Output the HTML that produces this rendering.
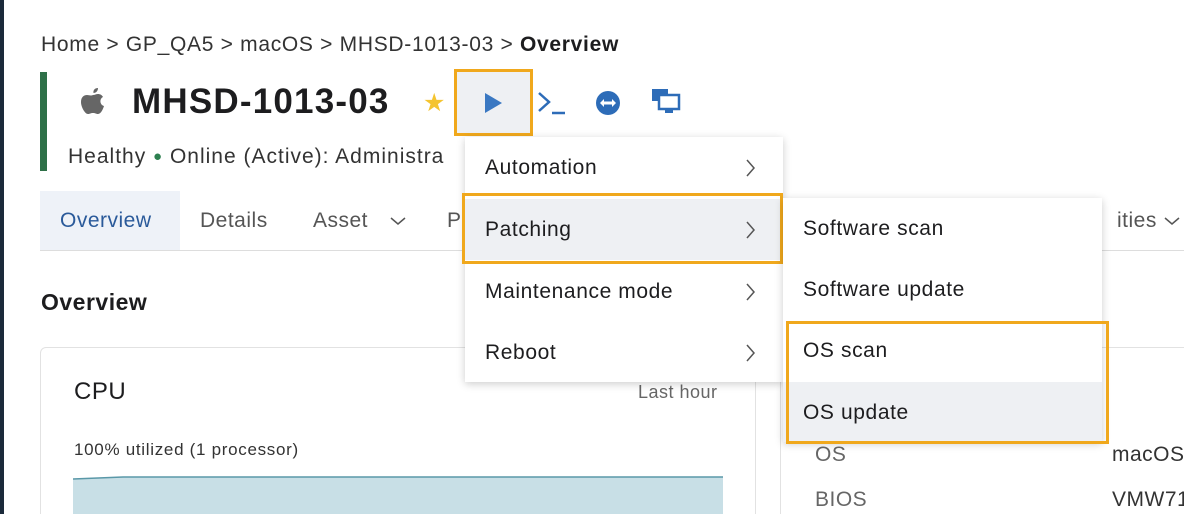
<!DOCTYPE html>
<html style="width:1184px;height:514px;overflow:hidden"><head><style>
*{margin:0;padding:0;box-sizing:border-box}
body{width:1184px;height:514px;overflow:hidden;background:#fff;font-family:"Liberation Sans",sans-serif;color:#1d1d1f;position:relative;letter-spacing:.5px}
.a{position:absolute;white-space:nowrap}
.mi{position:absolute;left:0;right:0;height:61px;font-size:21px;padding-left:20px;line-height:61px;color:#1d1d1f;letter-spacing:.6px}
.chev{position:absolute;right:28px;top:22px}
</style></head><body>
<div class="a" style="left:0;top:0;width:4px;height:514px;background:#1b2a3a"></div>
<div class="a" style="left:41px;top:33px;font-size:21px;color:#333;letter-spacing:.7px">Home &gt; GP_QA5 &gt; macOS &gt; MHSD-1013-03 &gt; <b style="color:#1d1d1f">Overview</b></div>
<div class="a" style="left:40px;top:72px;width:7px;height:99px;background:#2e7048"></div>
<svg class="a" style="left:80px;top:86px" width="26" height="32" viewBox="0 0 26 32"><path d="M18 2c0 3-2 5-4.5 5C13 4 15 2 18 2zM13 9c2 0 3-1 5-1 2 0 4 1 5 3-4 2-3 8 1 9-1 3-3 8-6 8-2 0-2.5-1-5-1s-3 1-5 1c-3 0-7-7-7-12 0-5 3-7 6-7 2 0 4 1 6 0z" fill="#666"/></svg>
<div class="a" style="left:132px;top:82px;font-size:35px;font-weight:bold;color:#1d1d1f;letter-spacing:1.2px">MHSD-1013-03</div>
<div class="a" style="left:423px;top:88px;font-size:25px;color:#f4c430">★</div>
<div class="a" style="left:454px;top:69px;width:79px;height:67px;border:3px solid #f0a81c;background:#eef0f3"></div>
<svg class="a" style="left:483px;top:92px" width="20" height="22"><path d="M2 1L19 11L2 21Z" fill="#3a78c2"/></svg>
<svg class="a" style="left:537px;top:90px" width="30" height="26"><path d="M2 3L12 12L2 21" fill="none" stroke="#2d6cb8" stroke-width="2.5"/><path d="M15 23H28" stroke="#2d6cb8" stroke-width="2.5"/></svg>
<svg class="a" style="left:595px;top:90px" width="26" height="26"><circle cx="13" cy="13" r="12" fill="#2d6cb8"/><path d="M5 13L9 9V17ZM21 13L17 9V17ZM9 11.5H17V14.5H9Z" fill="#fff"/></svg>
<svg class="a" style="left:651px;top:88px" width="30" height="28"><rect x="1" y="1" width="16" height="12" fill="#2d6cb8"/><rect x="8" y="7" width="20" height="14" fill="#fff" stroke="#2d6cb8" stroke-width="2.5"/><rect x="14" y="22" width="8" height="3" fill="#2d6cb8"/></svg>
<div class="a" style="left:68px;top:145px;font-size:21px;color:#333;letter-spacing:1px">Healthy <span style="color:#2e8050;font-size:15px;position:relative;top:-2px">●</span> Online (Active): Administra</div>
<div class="a" style="left:40px;top:191px;width:140px;height:59px;background:#eef2f8"></div>
<div class="a" style="left:40px;top:250px;width:1144px;height:1px;background:#ddd"></div>
<div class="a" style="left:60px;top:209px;font-size:21px;color:#2a5a9a">Overview</div>
<div class="a" style="left:200px;top:209px;font-size:21px;color:#555">Details</div>
<div class="a" style="left:313px;top:209px;font-size:21px;color:#555">Asset</div>
<svg class="a" style="left:390px;top:216px" width="16" height="10"><path d="M1 2L8 8L15 2" fill="none" stroke="#555" stroke-width="1.5"/></svg>
<div class="a" style="left:447px;top:209px;font-size:21px;color:#555">P</div>
<div class="a" style="left:1117px;top:209px;font-size:21px;color:#555">ities</div>
<svg class="a" style="left:1164px;top:216px" width="16" height="10"><path d="M1 2L8 8L15 2" fill="none" stroke="#555" stroke-width="1.5"/></svg>
<div class="a" style="left:41px;top:289px;font-size:23px;font-weight:bold;color:#1d1d1f">Overview</div>
<div class="a" style="left:40px;top:347px;width:716px;height:190px;border:1px solid #e2e2e2;border-radius:6px"></div>
<div class="a" style="left:74px;top:378px;font-size:24px">CPU</div>
<div class="a" style="left:638px;top:382px;font-size:18px;color:#666">Last hour</div>
<div class="a" style="left:74px;top:440px;font-size:17px;color:#333;letter-spacing:.7px">100% utilized (1 processor)</div>
<svg class="a" style="left:73px;top:474px" width="650" height="40"><path d="M0 5L50 3H650V40H0Z" fill="#c8dfe6"/><path d="M0 5L50 3H650" fill="none" stroke="#5a98a8" stroke-width="1.5"/></svg>
<div class="a" style="left:780px;top:347px;width:420px;height:190px;border:1px solid #e2e2e2;border-radius:6px"></div>
<div class="a" style="left:815px;top:443px;font-size:21px;color:#666">OS</div>
<div class="a" style="left:1112px;top:443px;font-size:21px;color:#333">macOS</div>
<div class="a" style="left:815px;top:488px;font-size:21px;color:#666">BIOS</div>
<div class="a" style="left:1112px;top:488px;font-size:21px;color:#333">VMW71</div>
<div class="a" style="left:465px;top:137px;width:318px;height:245px;background:#fff;box-shadow:0 2px 8px rgba(0,0,0,.2)">
<div class="mi" style="top:0">Automation<svg class="chev" width="10" height="18"><path d="M2 1L9 9L2 17" fill="none" stroke="#555" stroke-width="1.5"/></svg></div>
<div class="mi" style="top:62px;background:#eef0f3">Patching<svg class="chev" width="10" height="18"><path d="M2 1L9 9L2 17" fill="none" stroke="#555" stroke-width="1.5"/></svg></div>
<div class="mi" style="top:124px">Maintenance mode<svg class="chev" width="10" height="18"><path d="M2 1L9 9L2 17" fill="none" stroke="#555" stroke-width="1.5"/></svg></div>
<div class="mi" style="top:185px">Reboot<svg class="chev" width="10" height="18"><path d="M2 1L9 9L2 17" fill="none" stroke="#555" stroke-width="1.5"/></svg></div>
</div>
<div class="a" style="left:462px;top:193px;width:321px;height:71px;border:3px solid #f0a81c"></div>
<div class="a" style="left:783px;top:198px;width:319px;height:244px;background:#fff;box-shadow:0 2px 8px rgba(0,0,0,.2)">
<div class="mi" style="top:0">Software scan</div>
<div class="mi" style="top:61px">Software update</div>
<div class="mi" style="top:122px">OS scan</div>
<div class="mi" style="top:184px;height:60px;background:#eef0f3">OS update</div>
</div>
<div class="a" style="left:786px;top:321px;width:323px;height:123px;border:3px solid #f0a81c"></div>
</body></html>
